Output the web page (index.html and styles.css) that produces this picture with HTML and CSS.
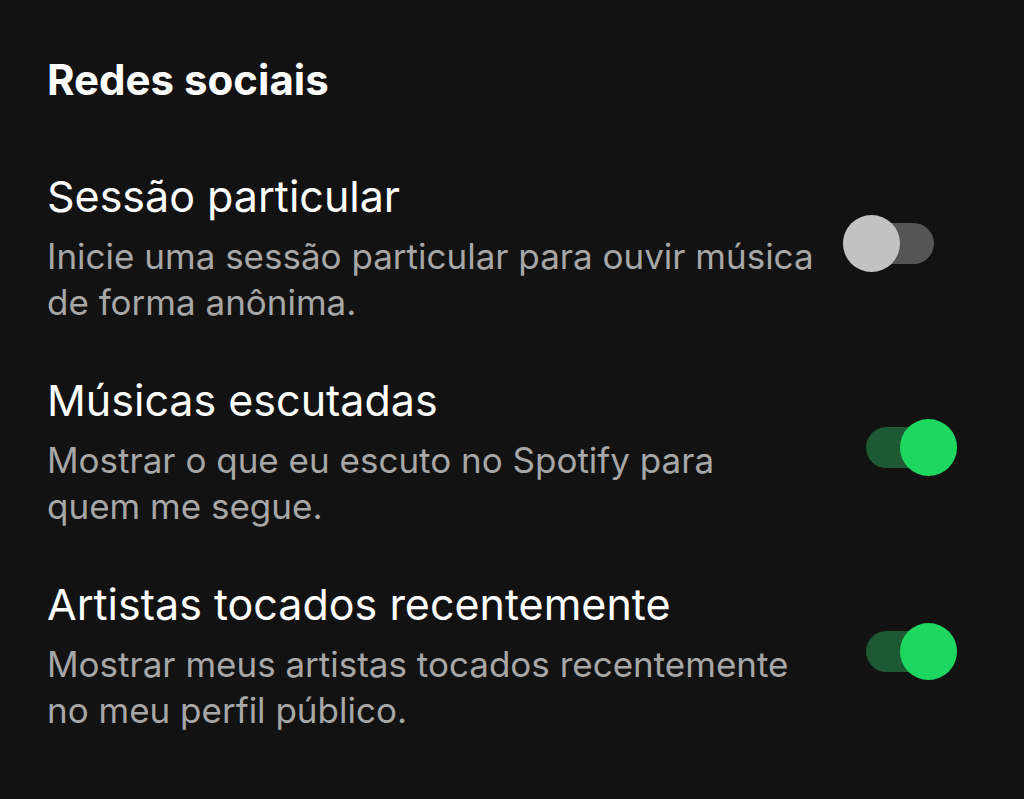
FILE: index.html
```html
<!DOCTYPE html>
<html>
<head>
  <title>Redes sociais</title>
  <link rel="stylesheet" href="styles.css">
</head>
<body>
  <div class="container">
    <h2 class="section-title">Redes sociais</h2>

    <div class="setting-row">
      <div class="setting-text">
        <div class="setting-label">Sessão particular</div>
        <p class="setting-description">Inicie uma sessão particular para ouvir música<br>de forma anônima.</p>
      </div>
      <div class="toggle toggle-off">
        <div class="toggle-track"></div>
        <div class="toggle-knob"></div>
      </div>
    </div>

    <div class="setting-row">
      <div class="setting-text">
        <div class="setting-label">Músicas escutadas</div>
        <p class="setting-description">Mostrar o que eu escuto no Spotify para<br>quem me segue.</p>
      </div>
      <div class="toggle toggle-on">
        <div class="toggle-track"></div>
        <div class="toggle-knob"></div>
      </div>
    </div>

    <div class="setting-row">
      <div class="setting-text">
        <div class="setting-label">Artistas tocados recentemente</div>
        <p class="setting-description">Mostrar meus artistas tocados recentemente<br>no meu perfil público.</p>
      </div>
      <div class="toggle toggle-on">
        <div class="toggle-track"></div>
        <div class="toggle-knob"></div>
      </div>
    </div>
  </div>
</body>
</html>
```

FILE: styles.css
```css
:root {
  --bg-primary: #121212;
  --text-primary: #ffffff;
  --text-secondary: #a7a7a7;
  --accent: #1ed760;
  --accent-dim: #1d5a33;
  --off-track: #555555;
  --off-knob: #c2c2c2;
}

* {
  margin: 0;
  padding: 0;
  box-sizing: border-box;
  font-family: Inter, 'Noto Sans', sans-serif;
}

body {
  width: 1024px;
  height: 799px;
  background: var(--bg-primary);
  color: var(--text-primary);
  overflow: hidden;
}

.container {
  display: flex;
  flex-direction: column;
  padding: 56px 67px 0 47px;
}

.section-title {
  font-size: 42px;
  font-weight: 700;
  line-height: 48px;
  margin-bottom: 67px;
}

.setting-row {
  display: flex;
  align-items: center;
  justify-content: space-between;
  margin-bottom: 50px;
}

.setting-text {
  display: flex;
  flex-direction: column;
  gap: 12px;
  width: 800px;
}

.setting-label {
  font-size: 43px;
  line-height: 50px;
}

.setting-description {
  font-size: 35px;
  line-height: 46px;
  color: var(--text-secondary);
}

.toggle {
  position: relative;
  width: 91px;
  height: 57px;
  flex-shrink: 0;
  margin-bottom: 10px;
}

.toggle-track {
  position: absolute;
  left: 0;
  right: 0;
  top: 8px;
  height: 41px;
  border-radius: 21px;
}

.toggle-knob {
  position: absolute;
  top: 0;
  width: 57px;
  height: 57px;
  border-radius: 50%;
}

.toggle-off {
  margin-right: 23px;
}

.toggle-off .toggle-track {
  background: var(--off-track);
}

.toggle-off .toggle-knob {
  left: 0;
  background: var(--off-knob);
}

.toggle-on .toggle-track {
  background: var(--accent-dim);
}

.toggle-on .toggle-knob {
  right: 0;
  background: var(--accent);
}
```
